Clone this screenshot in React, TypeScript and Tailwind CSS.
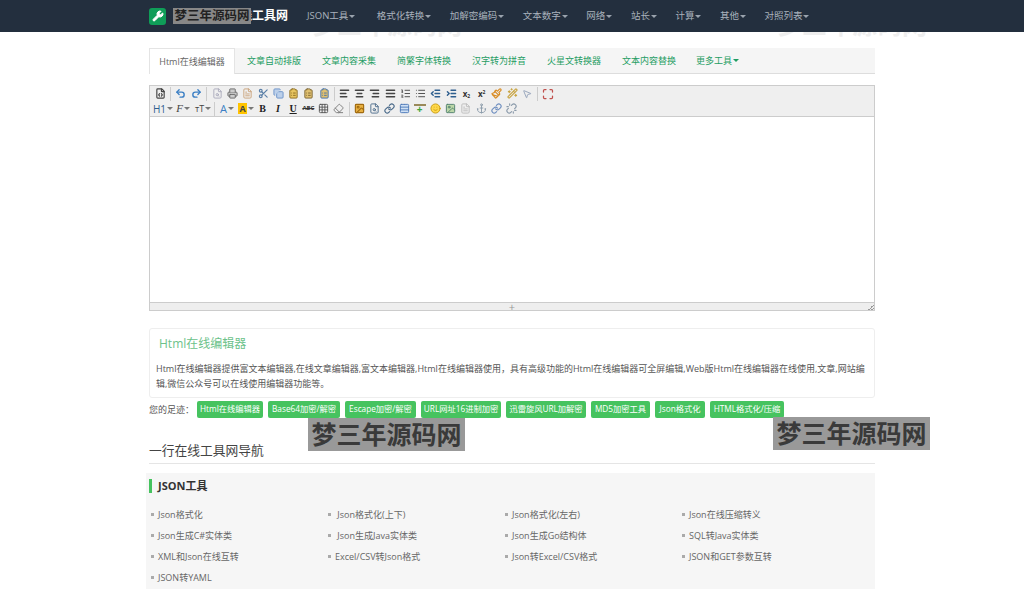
import React from "react";
import {
	AlignCenter,
	AlignJustify,
	AlignLeft,
	AlignRight,
	Anchor,
	ClipboardList,
	Copy,
	Eraser,
	FileCode,
	FileSearch,
	FileText,
	Grid3x3,
	Image,
	Indent,
	Link,
	List,
	ListOrdered,
	Maximize,
	MousePointer2,
	Outdent,
	Paintbrush,
	Printer,
	Redo2,
	Scissors,
	Smile,
	Table,
	Undo2,
	Unlink,
	Wand2,
	Wrench,
} from "lucide-react";

const font = "font-['Open_Sans','Noto_Sans_CJK_SC',sans-serif]";

const navItems = ["JSON工具", "格式化转换", "加解密编码", "文本数字", "网络", "站长", "计算", "其他", "对照列表"];
const tabs = ["文章自动排版", "文章内容采集", "简繁字体转换", "汉字转为拼音", "火星文转换器", "文本内容替换"];
const history = [
	{ label: "Html在线编辑器", w: "w-[66px]" },
	{ label: "Base64加密/解密", w: "w-[72px]" },
	{ label: "Escape加密/解密", w: "w-[71px]" },
	{ label: "URL网址16进制加密", w: "w-[80px]" },
	{ label: "迅雷旋风URL加解密", w: "w-[80px]" },
	{ label: "MD5加密工具", w: "w-[59px]" },
	{ label: "Json格式化", w: "w-[50px]" },
	{ label: "HTML格式化/压缩", w: "w-[74px]" },
];
const links = [
	"Json格式化",
	"\u00a0Json格式化(上下)",
	"Json格式化(左右)",
	"Json在线压缩转义",
	"Json生成C#实体类",
	"\u00a0Json生成Java实体类",
	"Json生成Go结构体",
	"SQL转Java实体类",
	"XML和Json在线互转",
	"Excel/CSV转Json格式",
	"Json转Excel/CSV格式",
	"JSON和GET参数互转",
	"JSON转YAML",
];

const Caret = ({ className = "border-t-[#9aa3ad]" }: { className?: string }) => (
	<span className={`ml-[1px] inline-block border-x-[3px] border-t-[3px] border-x-transparent ${className}`} />
);

const Sep = ({ className = "mx-[2px]" }: { className?: string }) => <span className={`h-[14px] w-px bg-[#ccc] ${className}`} />;

const Tool = ({ children, w = "w-[15.25px]" }: { children: React.ReactNode; w?: string }) => (
	<span className={`flex h-[15px] shrink-0 items-center justify-center ${w}`}>{children}</span>
);

const Mini = ({ children }: { children: React.ReactNode }) => <span className="flex items-center text-[8px] leading-none text-[#444]">{children}</span>;

const EditorToolbar = () => (
	<div className="border-b border-[#ccc] bg-[#efefef] pl-[3px]">
		<div className="flex h-[15px] items-center">
			<Tool><FileCode size={11} color="#444" strokeWidth={2.5} /></Tool>
			<Sep />
			<Tool><Undo2 size={11} color="#3b7fc4" strokeWidth={3} /></Tool>
			<Tool><Redo2 size={11} color="#3b7fc4" strokeWidth={3} /></Tool>
			<Sep className="ml-[2px] mr-[3px]" />
			<Tool><FileSearch size={11} color="#aab" /></Tool>
			<Tool><Printer size={11} color="#666" fill="#ccc" /></Tool>
			<Tool><FileText size={11} color="#c9a27a" /></Tool>
			<Tool><Scissors size={11} color="#5a7fa8" strokeWidth={2.5} /></Tool>
			<Tool><Copy size={11} color="#6a92c8" fill="#bcd0ea" /></Tool>
			<Tool><ClipboardList size={11} color="#8a6a20" fill="#e8c560" /></Tool>
			<Tool><ClipboardList size={11} color="#7a6230" fill="#e0c070" /></Tool>
			<Tool><ClipboardList size={11} color="#3f6fa8" fill="#e0c070" /></Tool>
			<Sep />
			<Tool><AlignLeft size={11} color="#444" strokeWidth={3} /></Tool>
			<Tool><AlignCenter size={11} color="#444" strokeWidth={3} /></Tool>
			<Tool><AlignRight size={11} color="#444" strokeWidth={3} /></Tool>
			<Tool><AlignJustify size={11} color="#444" strokeWidth={3} /></Tool>
			<Tool><ListOrdered size={11} color="#444" /></Tool>
			<Tool><List size={11} color="#444" /></Tool>
			<Tool><Outdent size={11} color="#2f5f8f" strokeWidth={3} /></Tool>
			<Tool><Indent size={11} color="#2f5f8f" strokeWidth={3} /></Tool>
			<Tool><span className="text-[8px] font-bold leading-none text-[#333]">x<sub className="text-[5px]">2</sub></span></Tool>
			<Tool><span className="text-[8px] font-bold leading-none text-[#333]">x<sup className="text-[5px]">2</sup></span></Tool>
			<Tool><Paintbrush size={11} color="#d98a1f" strokeWidth={2.5} /></Tool>
			<Tool><Wand2 size={11} color="#c9a544" strokeWidth={2.5} /></Tool>
			<Tool><MousePointer2 size={10} color="#8a9ab5" /></Tool>
			<Sep />
			<Tool><Maximize size={12} color="#c0504d" strokeWidth={2.5} /></Tool>
		</div>
		<div className="flex h-[15px] items-center">
			<Tool w="w-[20px]"><Mini><span className="text-[10px] text-[#2f5f8f]">H1</span><Caret className="border-t-[#777]" /></Mini></Tool>
			<Tool w="w-[20px]"><Mini><span className="font-['Liberation_Serif',serif] text-[11px] italic">F</span><Caret className="border-t-[#777]" /></Mini></Tool>
			<Tool w="w-[20px]"><Mini><span className="text-[9px]">тT</span><Caret className="border-t-[#777]" /></Mini></Tool>
			<Sep className="mx-[1px]" />
			<Tool w="w-[20px] ml-[1px]"><Mini><span className="text-[11px] text-[#3b7fc4]">A</span><Caret className="border-t-[#777]" /></Mini></Tool>
			<Tool w="w-[18px]"><Mini><span className="bg-[#ffc400] px-[1.5px] py-px text-[9px] font-bold">A</span><Caret className="border-t-[#777]" /></Mini></Tool>
			<Tool><span className="font-['Liberation_Serif',serif] text-[10px] font-bold text-[#222]">B</span></Tool>
			<Tool><span className="font-['Liberation_Serif',serif] text-[10px] font-bold italic text-[#222]">I</span></Tool>
			<Tool><span className="font-['Liberation_Serif',serif] text-[10px] font-bold text-[#222] underline">U</span></Tool>
			<Tool><span className="text-[6px] font-bold text-[#333] line-through">ABC</span></Tool>
			<Tool><Grid3x3 size={11} color="#555" /></Tool>
			<Tool><Eraser size={11} color="#777" /></Tool>
			<Sep />
			<Tool><Image size={11} color="#a06a10" strokeWidth={2.5} fill="#e8b040" /></Tool>
			<Tool><FileSearch size={11} color="#4a6a8a" /></Tool>
			<Tool><Link size={11} color="#4a6a8a" strokeWidth={2.5} /></Tool>
			<Tool><Table size={11} color="#4c78b8" fill="#cfe0f4" /></Tool>
			<Tool><span className="flex h-[9px] w-[12px] items-start border-t-2 border-[#9a8a5a] text-[10px] font-bold leading-[6px] text-[#3da53d]">&nbsp;+</span></Tool>
			<Tool><Smile size={11} color="#c79a10" fill="#ffd84a" /></Tool>
			<Tool><Image size={11} color="#4f7f6f" fill="#bcd7a8" /></Tool>
			<Tool><FileText size={11} color="#bbb" /></Tool>
			<Tool><Anchor size={11} color="#8a9aaa" /></Tool>
			<Tool><Link size={11} color="#6f8fc0" strokeWidth={2.5} /></Tool>
			<Tool><Unlink size={11} color="#8a9aaa" strokeWidth={2.5} /></Tool>
		</div>
	</div>
);

const Watermark = ({ className }: { className: string }) => (
	<div className={`absolute flex h-[33px] w-[157px] items-center justify-center bg-[#999] text-[25px] font-bold leading-none text-[#3a3a3a] ${className}`}>梦三年源码网</div>
);

const FaintMark = ({ className }: { className: string }) => (
	<div className={`absolute h-[5px] w-[150px] overflow-hidden whitespace-nowrap text-[25px] font-bold text-[#eee] ${className}`}>
		<div className="-mt-[21px] leading-[26px]">梦三年源码网</div>
	</div>
);

export default function App() {
	return (
		<div className={`relative h-[595px] w-[1024px] overflow-hidden bg-white ${font}`}>
			<header className="h-[32px] bg-[#232f3e]">
				<div className="relative mx-auto flex h-full w-[726px] items-center">
					<span className="flex h-[17px] w-[17px] items-center justify-center rounded-[3px] bg-[#0f9d58]">
						<Wrench size={12} color="#fff" fill="#fff" />
					</span>
					<span className="ml-[7px] w-[115px] overflow-hidden whitespace-nowrap text-right text-[12px] font-bold text-white">在线工具网</span>
					<div className="ml-[19px] flex items-center gap-[18.5px] text-[9.5px] text-[#a9b2bc]">
						{navItems.map((item) => (
							<span key={item} className="flex items-center whitespace-nowrap first:mr-[3px]">
								{item}
								<Caret />
							</span>
						))}
					</div>
					<div className="absolute left-[24px] top-[8px] flex h-[16px] w-[78px] items-center justify-center whitespace-nowrap bg-[#888] text-[12.5px] font-bold text-[#222]">梦三年源码网</div>
				</div>
			</header>
			<FaintMark className="left-[312px] top-[32px]" />
			<FaintMark className="left-[777px] top-[32px]" />

			<main className="mx-auto w-[726px] pt-[16px]">
				<nav className="flex h-[26px] items-stretch border-b border-[#ddd] bg-[#f5f5f5] text-[9px] text-[#1f9d63]">
					<span className="-mb-px flex w-[86px] items-center justify-center border border-b-0 border-[#e4e4e4] bg-white text-[#666]">Html在线编辑器</span>
					<span className="w-[1.5px]" />
					{tabs.map((tab) => (
						<span key={tab} className="flex w-[75px] items-center justify-center whitespace-nowrap">{tab}</span>
					))}
					<span className="flex w-[62px] items-center justify-center whitespace-nowrap">
						更多工具
						<Caret className="border-t-[#1f9d63]" />
					</span>
				</nav>

				<div className="mt-[11px] border border-[#ccc]">
					<EditorToolbar />
					<div className="h-[185px] bg-white" />
					<div className="relative flex h-[8px] items-center justify-center border-t border-[#ccc] bg-[#eee]">
						<span className="text-[11px] leading-none text-[#999]">+</span>
						<span className="absolute bottom-0 right-0 h-[6px] w-[6px] bg-[linear-gradient(135deg,transparent_50%,#999_50%,#999_60%,transparent_60%,transparent_75%,#999_75%,#999_85%,transparent_85%)]" />
					</div>
				</div>

				<section className="mt-[17px] h-[70px] rounded-[3px] border border-[#eee] pl-[6px] pr-[8px] pt-[6px]">
					<h1 className="pl-[3px] text-[12px] font-normal leading-[18px] text-[#6cc28a]">Html在线编辑器</h1>
					<p className="mt-[8px] text-[9px] leading-[15px] text-[#555]">
						Html在线编辑器提供富文本编辑器,在线文章编辑器,富文本编辑器,Html在线编辑器使用，具有高级功能的Html在线编辑器可全屏编辑,Web版Html在线编辑器在线使用,文章,网站编辑,微信公众号可以在线使用编辑器功能等。
					</p>
				</section>

				<div className="mt-[3px] flex items-center text-[9px]">
					<span className="w-[48px] text-[#555]">您的足迹：</span>
					<div className="flex gap-[5px]">
						{history.map((item) => (
							<span key={item.label} className={`flex h-[17px] items-center justify-center whitespace-nowrap rounded-[2px] bg-[#46c35f] text-[8.25px] text-white ${item.w}`}>{item.label}</span>
						))}
					</div>
				</div>

				<h2 className="mt-[22px] border-b border-[#e5e5e5] pb-[3px] text-[12.75px] font-normal leading-[20px] text-[#444]">一行在线工具网导航</h2>

				<section className="-ml-[3px] mt-[9px] h-[116px] bg-[#f6f6f6] pl-[3px] pt-[6px]">
					<h3 className="border-l-[3px] border-[#46c35f] pl-[6px] text-[11px] font-bold leading-[14px] text-[#333]">JSON工具</h3>
					<ul className="mt-[11px] grid grid-cols-[177px_177px_177px_177px] text-[9px] leading-[21px] text-[#666]">
						{links.map((link) => (
							<li key={link} className="flex items-center whitespace-pre">
								<span className="ml-[2px] mr-[4px] h-[3px] w-[3px] bg-[#aaa]" />
								{link}
							</li>
						))}
					</ul>
				</section>
			</main>

			<Watermark className="left-[308px] top-[418px]" />
			<Watermark className="left-[773px] top-[417px]" />
		</div>
	);
}
